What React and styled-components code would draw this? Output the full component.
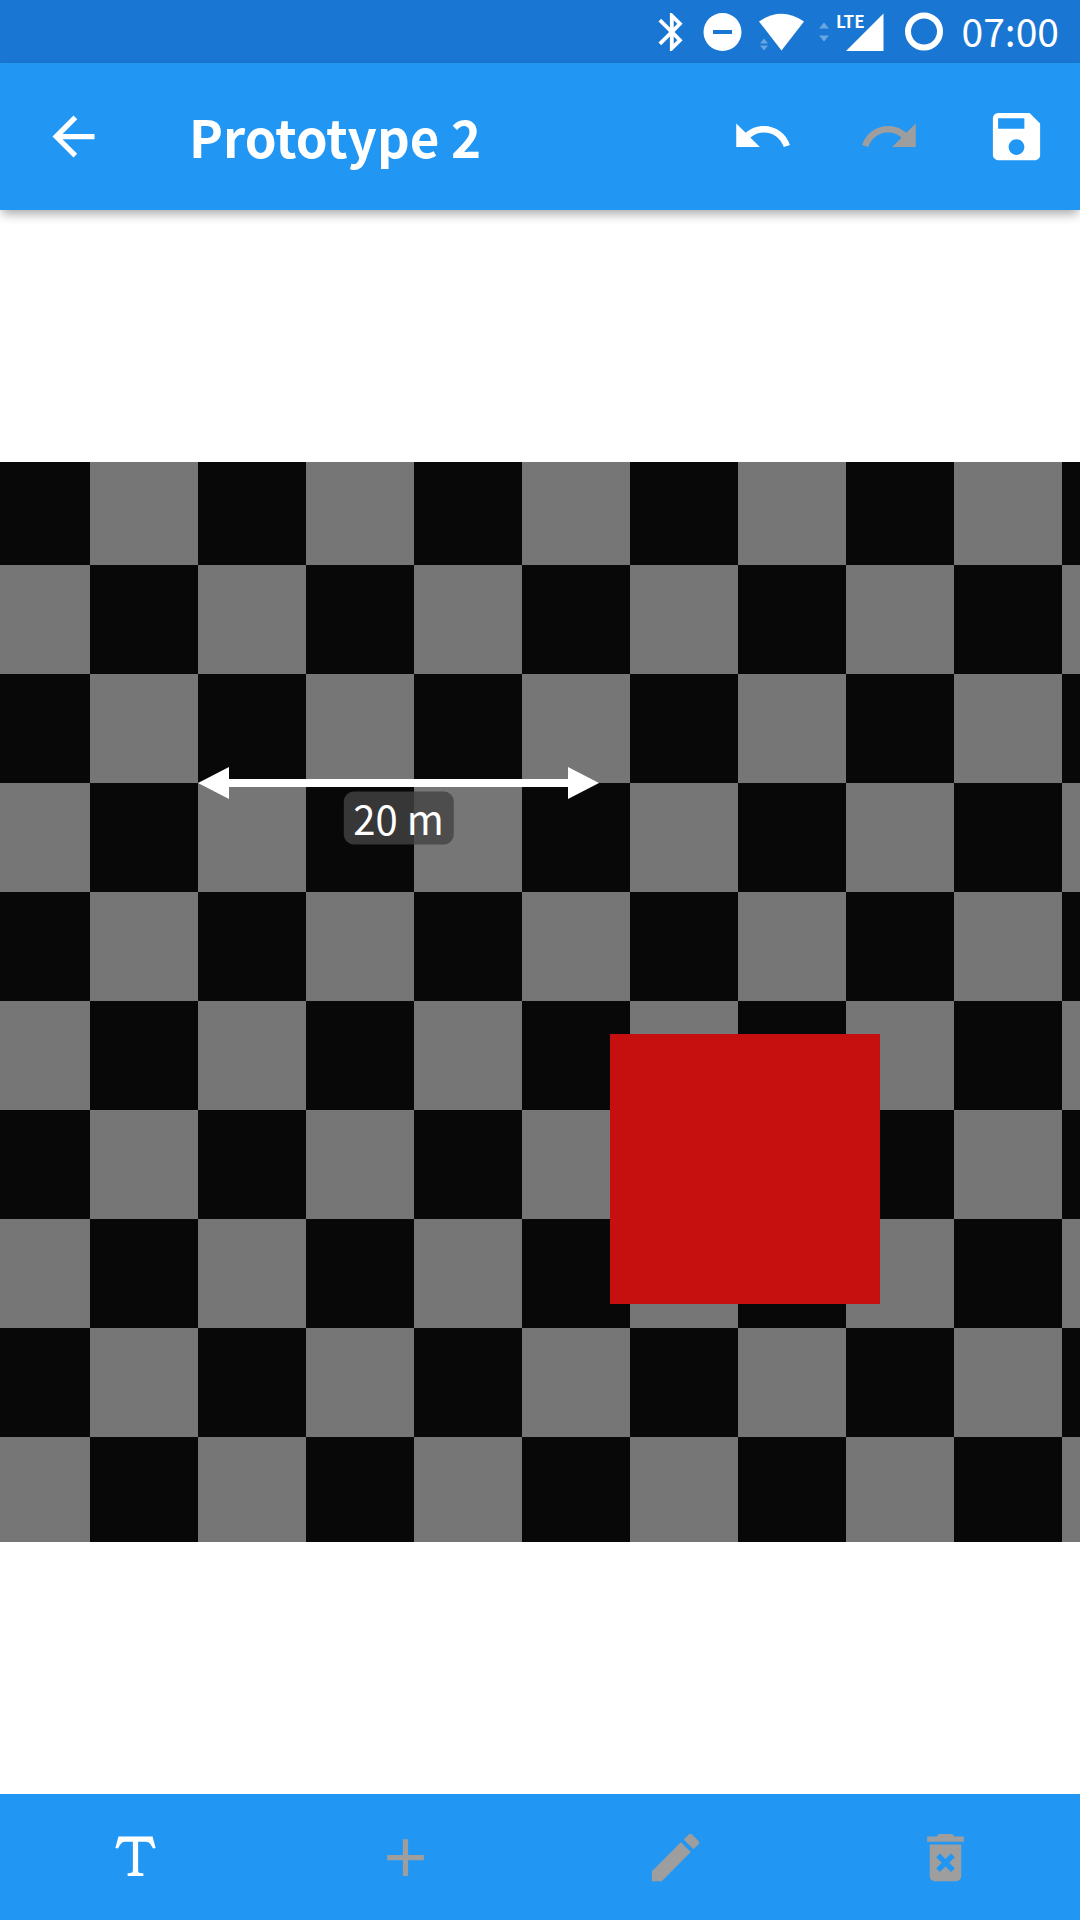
import React from "react";
import styled, { createGlobalStyle } from "styled-components";

const GlobalStyle = createGlobalStyle`
  *, *::before, *::after { box-sizing: border-box; }
  body { margin: 0; background: #fff; }
`;

const Screen = styled.div`
  display: flex;
  flex-direction: column;
  min-height: 100vh;
  color: #fff;
  font-family: "Noto Sans CJK SC", "Noto Sans", sans-serif;
`;

const StatusBar = styled.div`
  display: flex;
  align-items: center;
  justify-content: flex-end;
  gap: 14px;
  height: 63px;
  padding-right: 21px;
  background: #1976d2;
`;

const StatusIcon = styled.svg`
  display: block;
  flex: none;
  height: 38px;
  fill: #fff;
  overflow: visible;
`;

const Faint = styled.g`
  opacity: 0.35;
`;

const Clock = styled.time`
  padding: 0 0 4px 3px;
  font-size: 39px;
  line-height: 48px;
`;

const AppBar = styled.header`
  position: relative;
  display: flex;
  align-items: stretch;
  height: 147px;
  background: #2196f3;
  box-shadow: 0 6px 10px -2px rgba(0, 0, 0, 0.34);
`;

const IconButton = styled.button`
  display: flex;
  align-items: center;
  justify-content: center;
  width: ${(p) => p.$width || "auto"};
  flex: ${(p) => (p.$grow ? "1 1 0" : "none")};
  padding: 0;
  border: 0;
  background: none;
  color: #fff;
  cursor: pointer;

  &:disabled {
    color: #9e9e9e;
    cursor: default;
  }
`;

const Glyph = styled.svg`
  display: block;
  width: 63px;
  height: 63px;
  fill: currentColor;
`;

const Title = styled.h1`
  flex: 1;
  align-self: center;
  margin: 0;
  padding: 0 0 2px 42px;
  font-size: 51px;
  font-weight: 700;
  line-height: 72px;
`;

const Workspace = styled.main`
  display: flex;
  flex: 1;
  align-items: center;
`;

const Picture = styled.div`
  position: relative;
  width: 100%;
`;

const Drawing = styled.svg`
  display: block;
  width: 100%;
  height: auto;
`;

const Measure = styled.span`
  position: absolute;
  top: 33%;
  left: 36.9%;
  transform: translate(-50%, -50%);
  padding: 0 10px;
  border-radius: 10px;
  background: rgba(68, 68, 68, 0.8);
  font-size: 40px;
  line-height: 53px;
  white-space: nowrap;
`;

const BottomBar = styled.nav`
  display: flex;
  height: 126px;
  background: #2196f3;
`;

const paths = {
  back: "M20 11H7.83l5.59-5.59L12 4l-8 8 8 8 1.41-1.41L7.83 13H20v-2z",
  undo: "M12.5 8c-2.65 0-5.05.99-6.9 2.6L2 7v9h9l-3.62-3.62c1.39-1.16 3.16-1.88 5.12-1.88 3.54 0 6.55 2.31 7.6 5.5l2.37-.78C21.08 11.03 17.15 8 12.5 8z",
  redo: "M18.4 10.6C16.55 8.99 14.15 8 11.5 8c-4.65 0-8.58 3.03-9.96 7.22L3.9 16c1.05-3.19 4.05-5.5 7.6-5.5 1.95 0 3.73.72 5.12 1.88L13 16h9V7l-3.6 3.6z",
  save: "M17 3H5a2 2 0 0 0-2 2v14a2 2 0 0 0 2 2h14c1.1 0 2-.9 2-2V7l-4-4zM12 19c-1.66 0-3-1.34-3-3s1.34-3 3-3 3 1.34 3 3-1.34 3-3 3zM15 9H5V5h10v4z",
  text: "M18.5 4l1.16 4.35-.96.26c-.45-.87-.91-1.74-1.44-2.18C16.73 6 16.11 6 15.5 6H13v10.5c0 .5 0 1 .33 1.25.34.25 1 .25 1.67.25v1H9v-1c.67 0 1.33 0 1.67-.25.33-.25.33-.75.33-1.25V6H8.5c-.61 0-1.23 0-1.76.43-.53.44-.99 1.31-1.44 2.18l-.96-.26L5.5 4h13z",
  add: "M19 13h-6v6h-2v-6H5v-2h6V5h2v6h6v2z",
  edit: "M3 17.25V21h3.75L17.81 9.94l-3.75-3.75L3 17.25zM20.71 7.04a.996.996 0 0 0 0-1.41l-2.34-2.34a.996.996 0 0 0-1.41 0l-1.83 1.83 3.75 3.75 1.83-1.83z",
  remove:
    "M6 19c0 1.1.9 2 2 2h8c1.1 0 2-.9 2-2V7H6v12zm2.46-7.12l1.41-1.41L12 12.59l2.12-2.12 1.41 1.41L13.41 14l2.12 2.12-1.41 1.41L12 15.41l-2.12 2.12-1.41-1.41L10.59 14l-2.13-2.12zM15.5 4l-1-1h-5l-1 1H5v2h14V4z",
};

function Action({ icon, label, ...rest }) {
  return (
    <IconButton type="button" aria-label={label} {...rest}>
      <Glyph viewBox="0 0 24 24" aria-hidden="true">
        <path d={paths[icon]} />
      </Glyph>
    </IconButton>
  );
}

const tools = [
  { icon: "text", label: "Text" },
  { icon: "add", label: "Add", disabled: true },
  { icon: "edit", label: "Edit", disabled: true },
  { icon: "remove", label: "Delete", disabled: true },
];

export default function App() {
  return (
    <Screen>
      <GlobalStyle />
      <StatusBar>
        <StatusIcon width="30" viewBox="0 0 30 38" aria-hidden="true">
          <path
            transform="translate(-9 -3.8) scale(1.9)"
            d="M17.71 7.71L12 2h-1v7.59L6.41 5 5 6.41 10.59 12 5 17.59 6.41 19 11 14.41V22h1l5.71-5.71-4.3-4.29 4.3-4.29zM13 5.83l1.88 1.88L13 9.59V5.83zm1.88 10.46L13 18.17v-3.76l1.88 1.88z"
          />
        </StatusIcon>
        <StatusIcon width="41" viewBox="0 0 41 38" aria-hidden="true">
          <path
            fillRule="evenodd"
            d="M20.5 0a19 19 0 1 1 0 38a19 19 0 1 1 0-38zM11 17v4h19v-4z"
          />
        </StatusIcon>
        <StatusIcon width="48" viewBox="0 0 48 38" aria-hidden="true">
          <path d="M2 8.5Q24.5-7 47 8.5L24.5 37.5z" />
          <Faint>
            <path d="M3 30.5h8l-4-5zM3 32.5h8l-4 5z" />
          </Faint>
        </StatusIcon>
        <StatusIcon width="68" viewBox="0 0 68 38" aria-hidden="true">
          <Faint>
            <path d="M0 15.5h10l-5-6zM0 22.500h10l-5 6z" />
          </Faint>
          <path d="M27 38L64.500 0.5V38z" />
          <text
            x="17"
            y="15"
            fontFamily='"Noto Sans CJK SC", sans-serif'
            fontWeight="700"
            fontSize="17"
          >
            LTE
          </text>
        </StatusIcon>
        <StatusIcon width="44" viewBox="0 0 44 38" aria-hidden="true">
          <circle cx="23" cy="18.5" r="16" fill="none" stroke="#fff" strokeWidth="6" />
        </StatusIcon>
        <Clock dateTime="07:00">07:00</Clock>
      </StatusBar>

      <AppBar>
        <Action icon="back" label="Back" $width="147px" />
        <Title>Prototype 2</Title>
        <Action icon="undo" label="Undo" $width="127px" />
        <Action icon="redo" label="Redo" $width="127px" disabled />
        <Action icon="save" label="Save" $width="127px" />
      </AppBar>

      <Workspace>
        <Picture>
          <Drawing viewBox="0 0 1080 1080" role="img" aria-label="Annotated picture">
            <defs>
              <pattern id="checks" x="-18" y="-6" width="216" height="218" patternUnits="userSpaceOnUse">
                <rect width="216" height="218" fill="#080808" />
                <rect x="108" width="108" height="109" fill="#767676" />
                <rect y="109" width="108" height="109" fill="#767676" />
              </pattern>
            </defs>
            <rect width="1080" height="1080" fill="url(#checks)" />
            <rect x="610" y="572" width="270" height="270" fill="#c6100f" />
            <path
              fill="#fff"
              d="M198 321l31-16v12h339v-12l31 16-31 16v-12H229v12z"
            />
          </Drawing>
          <Measure>20 m</Measure>
        </Picture>
      </Workspace>

      <BottomBar>
        {tools.map((tool) => (
          <Action key={tool.label} $grow {...tool} />
        ))}
      </BottomBar>
    </Screen>
  );
}
